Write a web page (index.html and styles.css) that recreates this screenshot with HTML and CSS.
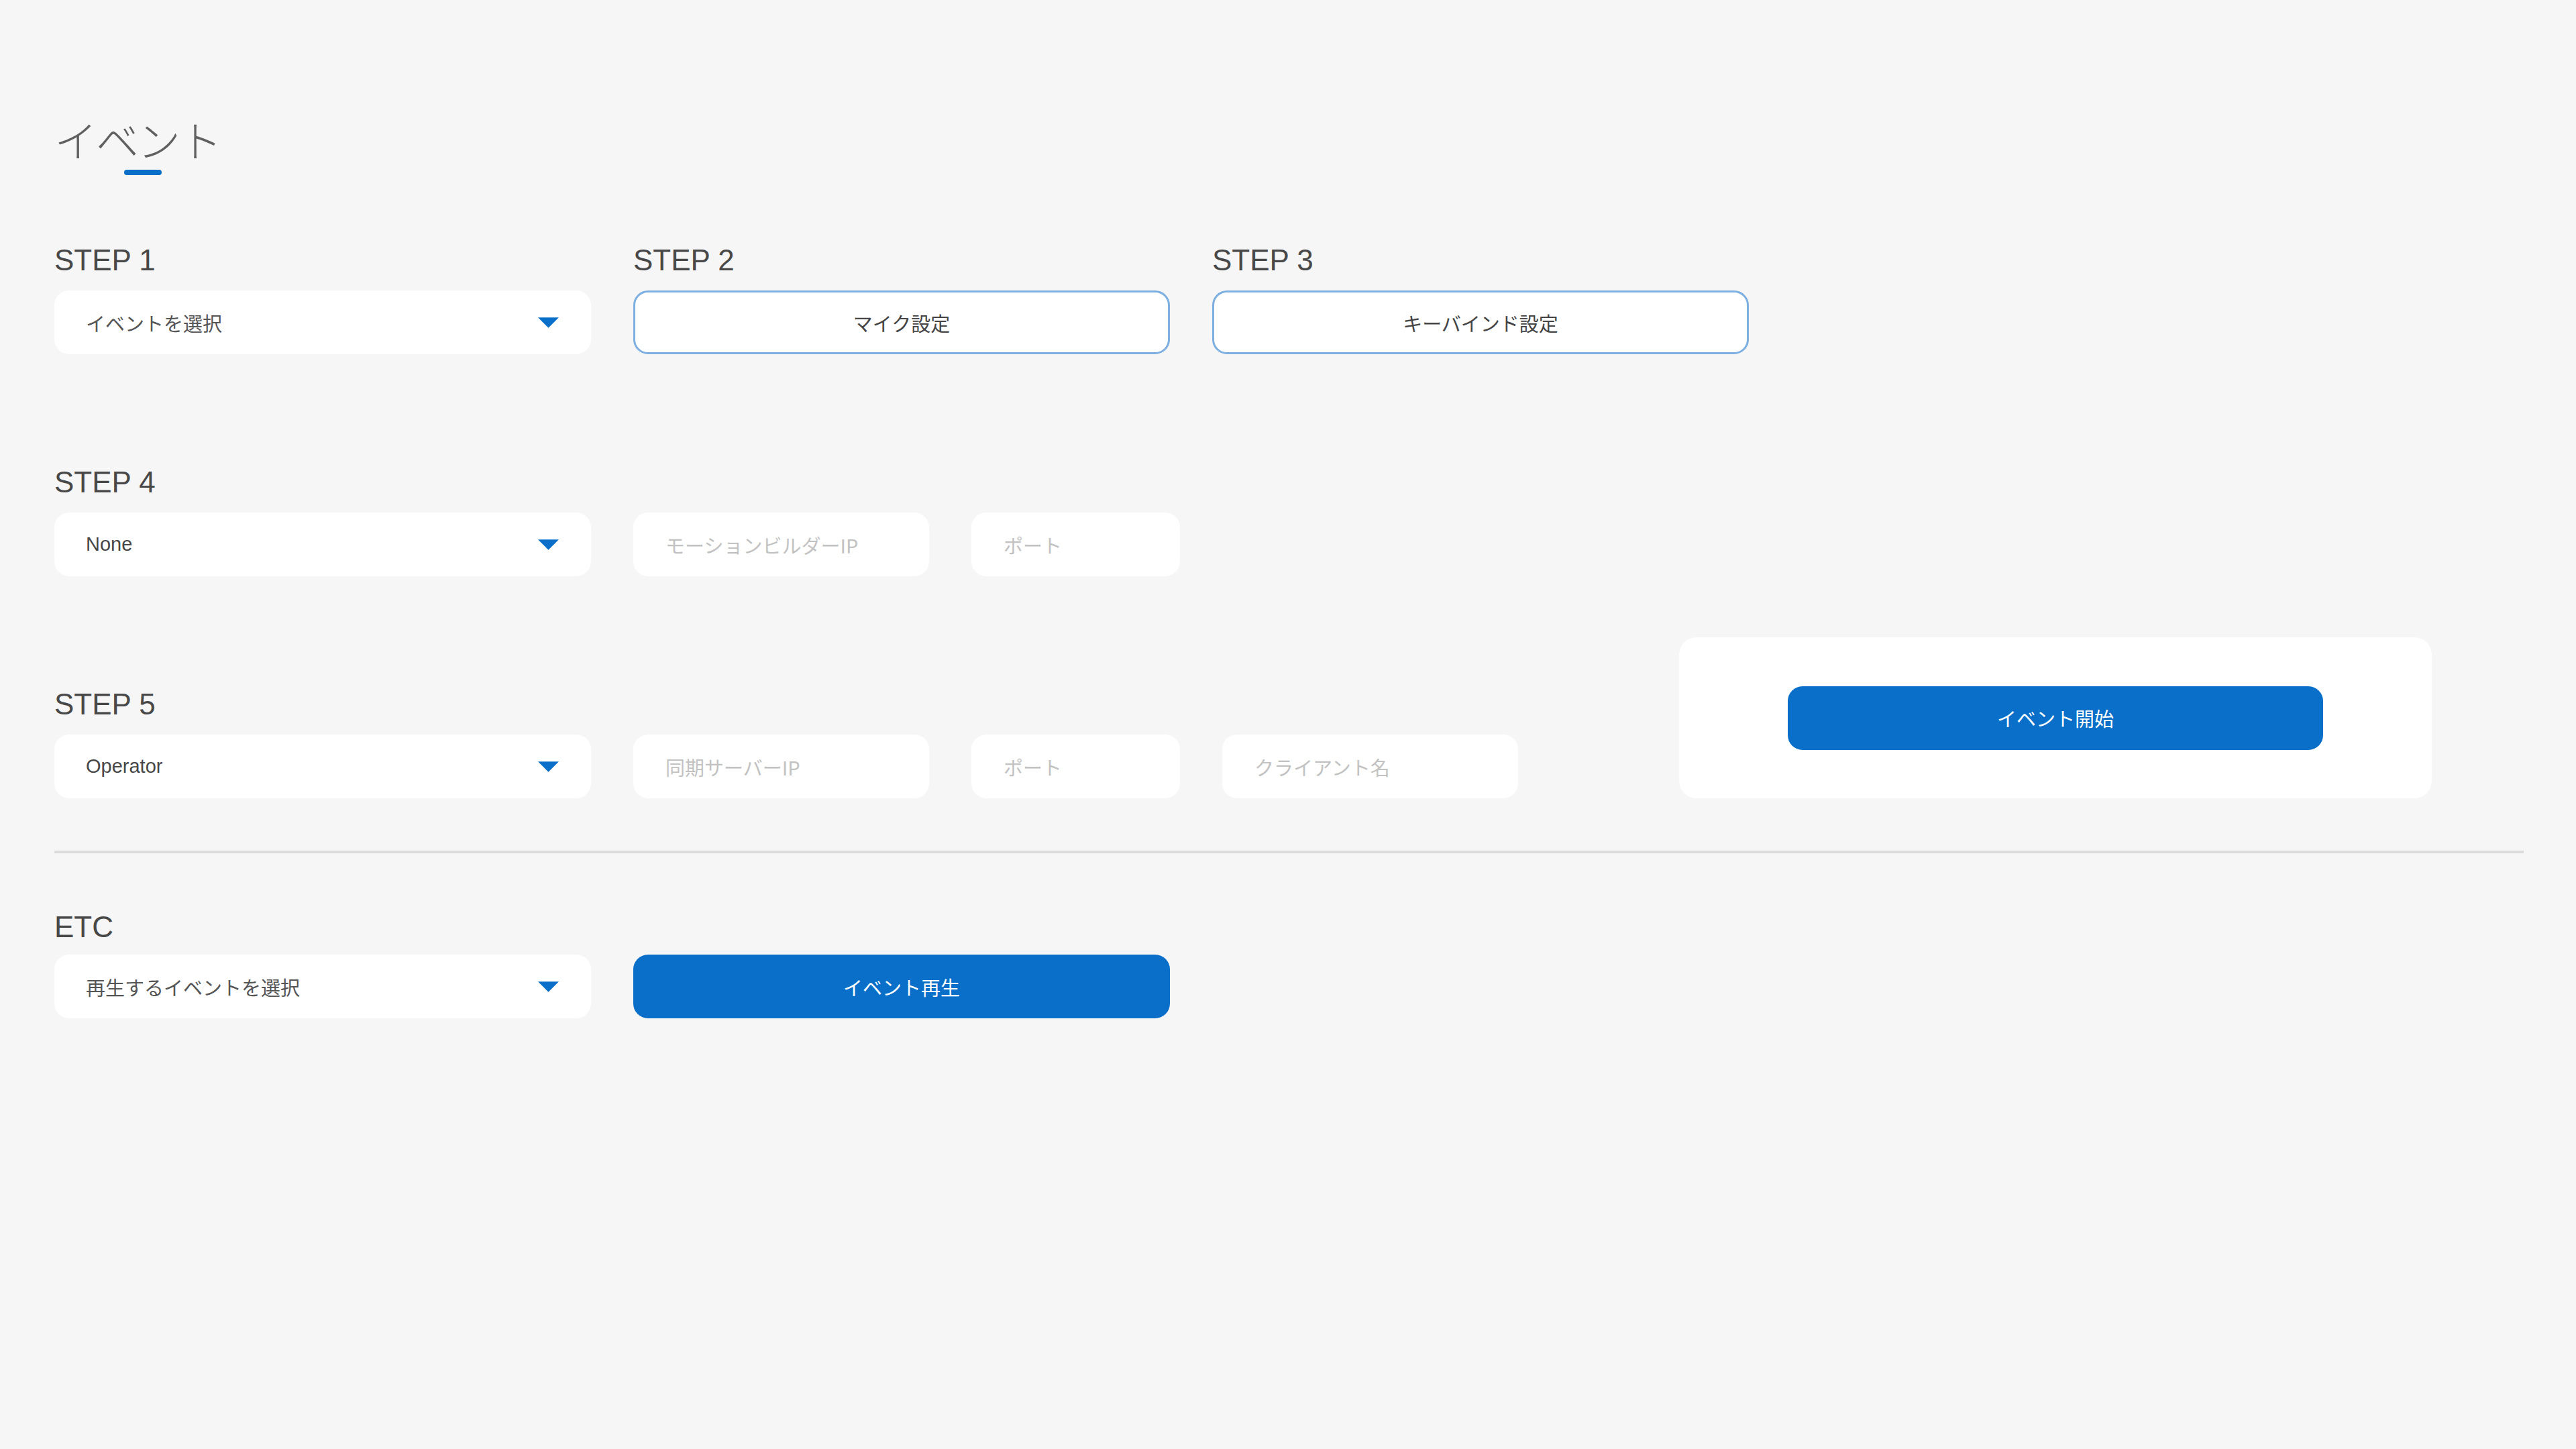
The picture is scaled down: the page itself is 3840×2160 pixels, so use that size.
FILE: index.html
```html
<!DOCTYPE html>
<html lang="ja">
<head>
<meta charset="utf-8">
<title>イベント</title>
<link rel="stylesheet" href="styles.css">
</head>
<body>
<main class="page">
  <h1 class="title">イベント</h1>

  <div class="steps-top">
    <section class="step">
      <h2 class="label">STEP 1</h2>
      <div class="select wide">
        <span class="select-text">イベントを選択</span>
        <svg class="caret" viewBox="0 0 32 16" width="32" height="16"><polygon points="0,0 32,0 16,16" fill="#0a6fc8"/></svg>
      </div>
    </section>
    <section class="step">
      <h2 class="label">STEP 2</h2>
      <button class="btn-outline wide">マイク設定</button>
    </section>
    <section class="step">
      <h2 class="label">STEP 3</h2>
      <button class="btn-outline wide">キーバインド設定</button>
    </section>
  </div>

  <section class="step step4">
    <h2 class="label">STEP 4</h2>
    <div class="row">
      <div class="select wide">
        <span class="select-text dark">None</span>
        <svg class="caret" viewBox="0 0 32 16" width="32" height="16"><polygon points="0,0 32,0 16,16" fill="#0a6fc8"/></svg>
      </div>
      <div class="field mid"><span class="placeholder">モーションビルダーIP</span></div>
      <div class="field short"><span class="placeholder">ポート</span></div>
    </div>
  </section>

  <div class="step5-wrap">
    <section class="step">
      <h2 class="label">STEP 5</h2>
      <div class="row">
        <div class="select wide">
          <span class="select-text dark">Operator</span>
          <svg class="caret" viewBox="0 0 32 16" width="32" height="16"><polygon points="0,0 32,0 16,16" fill="#0a6fc8"/></svg>
        </div>
        <div class="field mid"><span class="placeholder">同期サーバーIP</span></div>
        <div class="field short"><span class="placeholder">ポート</span></div>
        <div class="field mid"><span class="placeholder">クライアント名</span></div>
      </div>
    </section>
    <div class="start-card">
      <button class="btn-primary wide">イベント開始</button>
    </div>
  </div>

  <hr class="divider">

  <section class="step etc">
    <h2 class="label">ETC</h2>
    <div class="row">
      <div class="select wide">
        <span class="select-text">再生するイベントを選択</span>
        <svg class="caret" viewBox="0 0 32 16" width="32" height="16"><polygon points="0,0 32,0 16,16" fill="#0a6fc8"/></svg>
      </div>
      <button class="btn-primary wide">イベント再生</button>
    </div>
  </section>
</main>
</body>
</html>
```

FILE: styles.css
```css
* { box-sizing: border-box; }

html, body {
  margin: 0;
  padding: 0;
  background: #f6f6f6;
}

body {
  font-family: "Liberation Sans", Arial, "Noto Sans CJK JP", sans-serif;
  color: #444;
}

.page {
  padding: 174px 78px 0 81px;
}

.title {
  display: inline-block;
  margin: 0;
  font-family: "Noto Sans CJK JP", sans-serif;
  font-weight: 300;
  font-size: 64px;
  line-height: 64px;
  color: #606060;
  letter-spacing: -2px;
}

.title::after {
  content: "";
  display: block;
  width: 56px;
  height: 8px;
  margin: 15px auto 0;
  border-radius: 4px;
  background: #0a6fc8;
  position: relative;
  left: 8px;
}

.steps-top {
  display: flex;
  gap: 63px;
  margin-top: 105px;
}

.step {
  display: flex;
  flex-direction: column;
}

.label {
  margin: 0 0 23px;
  font-family: "Liberation Sans", Arial, sans-serif;
  font-weight: 400;
  font-size: 44px;
  line-height: 44px;
  color: #484848;
}

.row {
  display: flex;
  gap: 63px;
}

.wide { width: 800px; }
.mid { width: 441px; }
.short { width: 311px; }

.select,
.field,
.btn-outline,
.btn-primary {
  height: 95px;
  border-radius: 22px;
  font-family: "Liberation Sans", Arial, "Noto Sans CJK JP", sans-serif;
  font-size: 29px;
}

.select {
  display: flex;
  align-items: center;
  justify-content: space-between;
  padding: 0 48px 0 47px;
  background: #fff;
}

.select-text {
  color: #555;
  font-family: "Noto Sans CJK JP", sans-serif;
}

.select-text.dark {
  font-family: "Liberation Sans", Arial, sans-serif;
  color: #474747;
}

.caret {
  display: block;
  width: 31px;
  height: 16px;
}

.field {
  display: flex;
  align-items: center;
  padding: 0 48px;
  background: #fff;
}

.placeholder {
  color: #c2c2c2;
  font-family: "Noto Sans CJK JP", sans-serif;
}

.btn-outline {
  display: flex;
  align-items: center;
  justify-content: center;
  background: #fff;
  border: 3px solid #7db0e0;
  color: #444;
  font-family: "Noto Sans CJK JP", sans-serif;
  padding: 0;
}

.btn-primary {
  display: flex;
  align-items: center;
  justify-content: center;
  background: #0a6fc8;
  border: none;
  color: #fff;
  font-family: "Noto Sans CJK JP", sans-serif;
  padding: 0;
}

.step4 {
  margin-top: 169px;
}

.step5-wrap {
  display: flex;
  align-items: flex-end;
  margin-top: 91px;
}

.start-card {
  margin-left: 240px;
  width: 1122px;
  height: 240px;
  background: #fff;
  border-radius: 26px;
  display: flex;
  align-items: center;
  justify-content: center;
}

.start-card .btn-primary {
  width: 798px;
}

.divider {
  border: none;
  height: 4px;
  background: #dcdcdc;
  margin: 78px 0 88px;
}

.etc .label {
  margin-bottom: 19px;
}
```
